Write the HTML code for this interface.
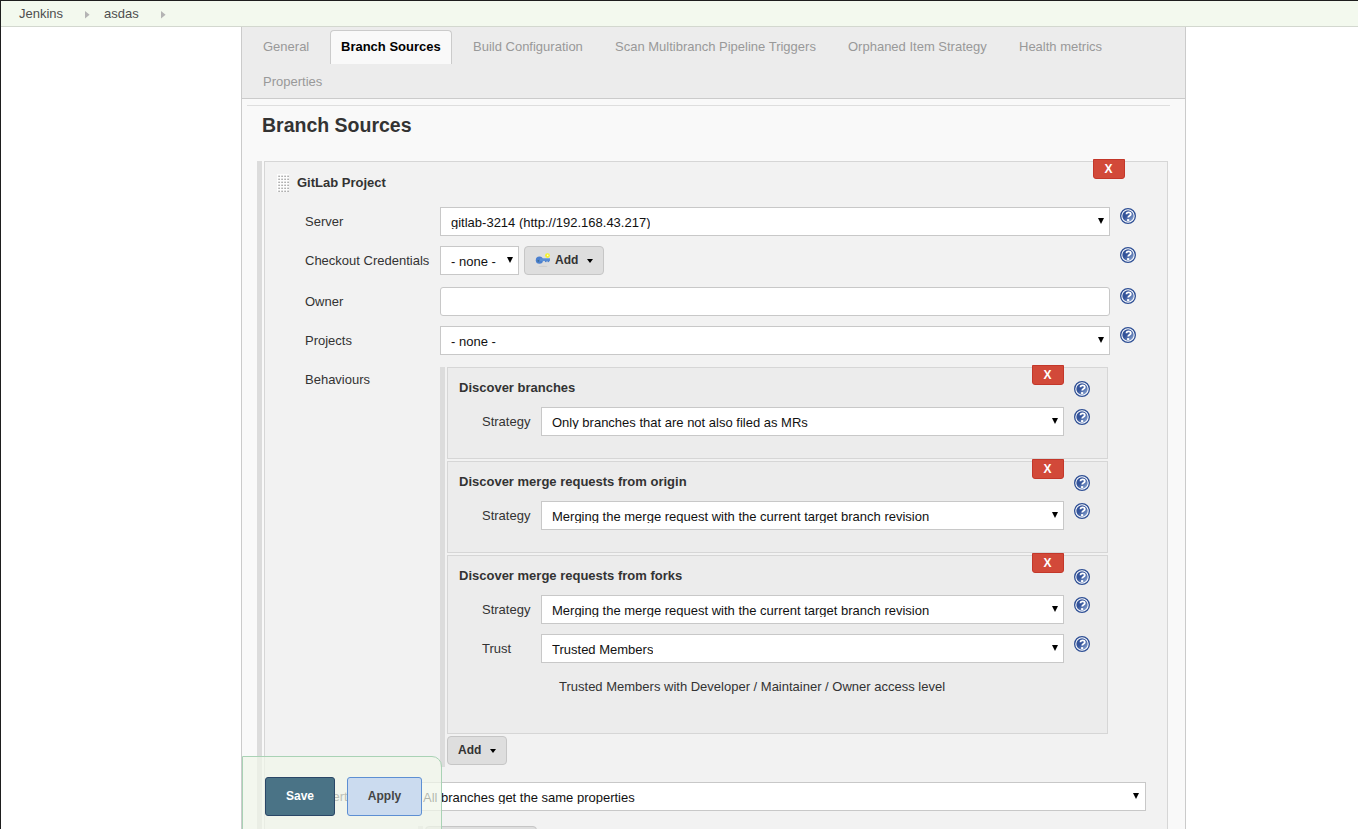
<!DOCTYPE html>
<html><head><meta charset="utf-8">
<style>
*{box-sizing:border-box;margin:0;padding:0}
html,body{width:1358px;height:829px;overflow:hidden;background:#fff;font-family:"Liberation Sans",sans-serif;font-size:13px;color:#333}
.a{position:absolute}
.t{position:absolute;white-space:nowrap;line-height:15px;font-size:13px}
.b{font-weight:bold}
#frameT{left:0;top:0;width:1358px;height:1px;background:#1e1e1e}
#frameL{left:0;top:0;width:1px;height:829px;background:#1e1e1e}
#bc{left:1px;top:1px;width:1357px;height:26px;background:#f3f9ee;border-bottom:1px solid #d3d8cf}
.bca{position:absolute;width:0;height:0;border-top:3.5px solid transparent;border-bottom:3.5px solid transparent;border-left:4px solid #aaa}
#panel{left:241px;top:27px;width:945px;height:802px;background:#f9f9f9;border-left:1px solid #cbcbcb;border-right:1px solid #cbcbcb}
#tabbar{left:242px;top:27px;width:943px;height:72px;background:#ececec;border-bottom:1px solid #cbcbcb}
.tab{position:absolute;color:#999}
.tab.act{background:#f9f9f9;border:1px solid #cbcbcb;border-bottom:none;border-radius:4px 4px 0 0;color:#000}
#hr{left:247px;top:105px;width:923px;height:1px;background:#dedede}
.sel{position:absolute;background:#fff;border:1px solid #c8c8c8;height:29px}
.sel .v{position:absolute;left:10px;top:7px;height:14px;overflow:hidden;line-height:15px;color:#111;white-space:nowrap}
.sel .ar{position:absolute;width:0;height:0;border-left:3px solid transparent;border-right:3px solid transparent;border-top:6px solid #000;top:10px}
.help{position:absolute;width:16px;height:16px}
.xb{position:absolute;width:32px;height:20px;background:#d24939;border:1px solid #c3372a;border-radius:0 0 3px 3px;color:#fff;text-align:center;line-height:18px;font-size:12px;font-weight:bold;padding-right:1px}
.box{position:absolute;border:1px solid #d6d6d6}
.bar{position:absolute;width:5px;background:#dcdcdc}
.btn{position:absolute;background:#dedede;border:1px solid #c6c6c6;border-radius:4px;height:29px}
</style></head><body>
<svg width="0" height="0" style="position:absolute">
<defs>
<linearGradient id="hg" x1="0.15" y1="0.15" x2="0.95" y2="0.95"><stop offset="0.35" stop-color="#33539a"/><stop offset="1" stop-color="#93acd6"/></linearGradient>
<symbol id="hi" viewBox="0 0 16 16">
<circle cx="8" cy="8" r="7.35" fill="#fff" stroke="#2d4e94" stroke-width="1.3"/>
<circle cx="8" cy="8" r="5.7" fill="url(#hg)"/>
<path d="M6.5 6.2 C6.4 3.7 10.9 3.7 10.8 6.2 C10.8 7.7 8.2 7.8 8.2 9.6" fill="none" stroke="#fff" stroke-width="1.8"/>
<rect x="7.1" y="11.1" width="2.1" height="2" fill="#fff"/>
</symbol>
</defs>
</svg>
<div id="frameT" class="a"></div><div id="frameL" class="a"></div>
<div id="bc" class="a">
 <div class="t" style="left:18px;top:5px;color:#4e4e4e">Jenkins</div>
 <svg class="a" style="left:84px;top:10px" width="5" height="8"><polygon points="0,0 4.6,3.7 0,7.4" fill="#b4b4b4"/></svg>
 <div class="t" style="left:103px;top:5px;color:#4e4e4e">asdas</div>
 <svg class="a" style="left:160px;top:10px" width="5" height="8"><polygon points="0,0 4.6,3.7 0,7.4" fill="#b4b4b4"/></svg>
</div>
<div id="panel" class="a"></div>
<div id="tabbar" class="a"></div>
<div class="tab t" style="left:263px;top:39px">General</div>
<div class="tab act a" style="left:330px;top:30px;width:122px;height:34px"></div>
<div class="t b" style="left:341px;top:39px;color:#000">Branch Sources</div>
<div class="tab t" style="left:473px;top:39px">Build Configuration</div>
<div class="tab t" style="left:615px;top:39px">Scan Multibranch Pipeline Triggers</div>
<div class="tab t" style="left:848px;top:39px">Orphaned Item Strategy</div>
<div class="tab t" style="left:1019px;top:39px">Health metrics</div>
<div class="tab t" style="left:263px;top:74px">Properties</div>
<div id="hr" class="a"></div>
<div class="t b" style="left:262px;top:114px;font-size:19.5px;line-height:22px;color:#333">Branch Sources</div>

<!-- GitLab box -->
<div class="bar" style="left:257px;top:161px;height:668px"></div>
<div class="box" style="left:264px;top:161px;width:904px;height:700px;background:#f2f2f2"></div>
<div class="xb" style="left:1093px;top:159px">X</div>
<svg class="a" style="left:277px;top:174px" width="12" height="18" viewBox="0 0 12 18">
<rect width="12" height="18" fill="#fdfdfd"/>
<g fill="#a9a9a9"><rect x="1.3" y="1.6" width="1.6" height="1.4"/><rect x="4.3" y="1.6" width="1.6" height="1.4"/><rect x="7.3" y="1.6" width="1.6" height="1.4"/><rect x="10.3" y="1.6" width="1.6" height="1.4"/><rect x="1.3" y="4.6" width="1.6" height="1.4"/><rect x="4.3" y="4.6" width="1.6" height="1.4"/><rect x="7.3" y="4.6" width="1.6" height="1.4"/><rect x="10.3" y="4.6" width="1.6" height="1.4"/><rect x="1.3" y="7.6" width="1.6" height="1.4"/><rect x="4.3" y="7.6" width="1.6" height="1.4"/><rect x="7.3" y="7.6" width="1.6" height="1.4"/><rect x="10.3" y="7.6" width="1.6" height="1.4"/><rect x="1.3" y="10.6" width="1.6" height="1.4"/><rect x="4.3" y="10.6" width="1.6" height="1.4"/><rect x="7.3" y="10.6" width="1.6" height="1.4"/><rect x="10.3" y="10.6" width="1.6" height="1.4"/><rect x="1.3" y="13.6" width="1.6" height="1.4"/><rect x="4.3" y="13.6" width="1.6" height="1.4"/><rect x="7.3" y="13.6" width="1.6" height="1.4"/><rect x="10.3" y="13.6" width="1.6" height="1.4"/><rect x="1.3" y="16.6" width="1.6" height="1.4"/><rect x="4.3" y="16.6" width="1.6" height="1.4"/><rect x="7.3" y="16.6" width="1.6" height="1.4"/><rect x="10.3" y="16.6" width="1.6" height="1.4"/></g></svg>
<div class="t b" style="left:297px;top:175px">GitLab Project</div>

<div class="t" style="left:305px;top:214px">Server</div>
<div class="sel" style="left:440px;top:207px;width:670px"><div class="v">gitlab-3214 (http://192.168.43.217)</div><div class="ar" style="left:657px"></div></div>
<svg class="help" style="left:1120px;top:208px"><use href="#hi"/></svg>

<div class="t" style="left:305px;top:253px">Checkout Credentials</div>
<div class="sel" style="left:440px;top:246px;width:79px"><div class="v">- none -</div><div class="ar" style="left:66px;top:10px"></div></div>
<div class="btn" style="left:524px;top:246px;width:80px"></div>
<svg class="a" style="left:534px;top:252px" width="17" height="16" viewBox="0 0 17 16">
<ellipse cx="9" cy="14.4" rx="4.5" ry="0.7" fill="#c4c4c4" opacity="0.6"/>
<circle cx="5.4" cy="8.2" r="3.6" fill="#4b80cf"/>
<rect x="6" y="6.3" width="10" height="2.8" fill="#5a8fd6"/>
<rect x="11" y="8.5" width="1.6" height="1.6" fill="#4f82cc"/>
<rect x="13.5" y="8.5" width="1.6" height="1.6" fill="#4f82cc"/>
<circle cx="4.3" cy="8.8" r="0.9" fill="#3c6a8a"/>
<circle cx="13.5" cy="3.6" r="2.4" fill="#f5f22a"/>
<circle cx="13.7" cy="3.4" r="0.8" fill="#fffbd0"/>
</svg>
<div class="t b" style="left:555px;top:253px;font-size:12px">Add</div>
<div class="a" style="left:587px;top:259px;width:0;height:0;border-left:3.5px solid transparent;border-right:3.5px solid transparent;border-top:4px solid #000"></div>
<svg class="help" style="left:1120px;top:247px"><use href="#hi"/></svg>

<div class="t" style="left:305px;top:294px">Owner</div>
<div class="sel" style="left:440px;top:287px;width:670px;border-radius:3px"></div>
<svg class="help" style="left:1120px;top:288px"><use href="#hi"/></svg>

<div class="t" style="left:305px;top:333px">Projects</div>
<div class="sel" style="left:440px;top:326px;width:670px"><div class="v">- none -</div><div class="ar" style="left:657px"></div></div>
<svg class="help" style="left:1120px;top:327px"><use href="#hi"/></svg>

<div class="t" style="left:305px;top:372px">Behaviours</div>
<div class="bar" style="left:440px;top:367px;height:400px"></div>

<div class="box" style="left:447px;top:367px;width:661px;height:92px;background:#ececec"></div>
<div class="xb" style="left:1032px;top:365px">X</div>
<div class="t b" style="left:459px;top:380px">Discover branches</div>
<svg class="help" style="left:1074px;top:381px"><use href="#hi"/></svg>
<div class="t" style="left:482px;top:414px">Strategy</div>
<div class="sel" style="left:541px;top:407px;width:523px"><div class="v">Only branches that are not also filed as MRs</div><div class="ar" style="left:510px"></div></div>
<svg class="help" style="left:1074px;top:409px"><use href="#hi"/></svg>

<div class="box" style="left:447px;top:461px;width:661px;height:92px;background:#ececec"></div>
<div class="xb" style="left:1032px;top:459px">X</div>
<div class="t b" style="left:459px;top:474px">Discover merge requests from origin</div>
<svg class="help" style="left:1074px;top:475px"><use href="#hi"/></svg>
<div class="t" style="left:482px;top:508px">Strategy</div>
<div class="sel" style="left:541px;top:501px;width:523px"><div class="v">Merging the merge request with the current target branch revision</div><div class="ar" style="left:510px"></div></div>
<svg class="help" style="left:1074px;top:503px"><use href="#hi"/></svg>

<div class="box" style="left:447px;top:555px;width:661px;height:179px;background:#ececec"></div>
<div class="xb" style="left:1032px;top:553px">X</div>
<div class="t b" style="left:459px;top:568px">Discover merge requests from forks</div>
<svg class="help" style="left:1074px;top:569px"><use href="#hi"/></svg>
<div class="t" style="left:482px;top:602px">Strategy</div>
<div class="sel" style="left:541px;top:595px;width:523px"><div class="v">Merging the merge request with the current target branch revision</div><div class="ar" style="left:510px"></div></div>
<svg class="help" style="left:1074px;top:597px"><use href="#hi"/></svg>
<div class="t" style="left:482px;top:641px">Trust</div>
<div class="sel" style="left:541px;top:634px;width:523px"><div class="v">Trusted Members</div><div class="ar" style="left:510px"></div></div>
<svg class="help" style="left:1074px;top:636px"><use href="#hi"/></svg>
<div class="t" style="left:559px;top:679px">Trusted Members with Developer / Maintainer / Owner access level</div>

<div class="btn" style="left:447px;top:736px;width:60px"></div>
<div class="t b" style="left:458px;top:743px;font-size:12px">Add</div>
<div class="a" style="left:490px;top:749px;width:0;height:0;border-left:3.5px solid transparent;border-right:3.5px solid transparent;border-top:4px solid #000"></div>

<div class="t" style="left:305px;top:789px">Property strategy</div>
<div class="sel" style="left:412px;top:782px;width:734px"><div class="v">All branches get the same properties</div><div class="ar" style="left:720px"></div></div>
<div class="bar" style="left:418px;top:826px;height:10px"></div>
<div class="btn" style="left:425px;top:826px;width:112px"></div>

<!-- bottom sticker -->
<div class="a" style="left:242px;top:756px;width:200px;height:80px;background:rgba(240,245,233,0.72);border:1px solid #a9d2b5;border-radius:0 10px 0 0"></div>
<div class="a" style="left:265px;top:777px;width:70px;height:39px;background:#4a7386;border:1px solid #2a4767;border-radius:3px"></div>
<div class="t b" style="left:265px;top:789px;width:70px;text-align:center;font-size:12px;color:#fff">Save</div>
<div class="a" style="left:347px;top:777px;width:75px;height:39px;background:#cbdbef;border:1px solid #5d8fd3;border-radius:3px"></div>
<div class="t b" style="left:347px;top:789px;width:75px;text-align:center;font-size:12px;color:#444">Apply</div>
</body></html>
